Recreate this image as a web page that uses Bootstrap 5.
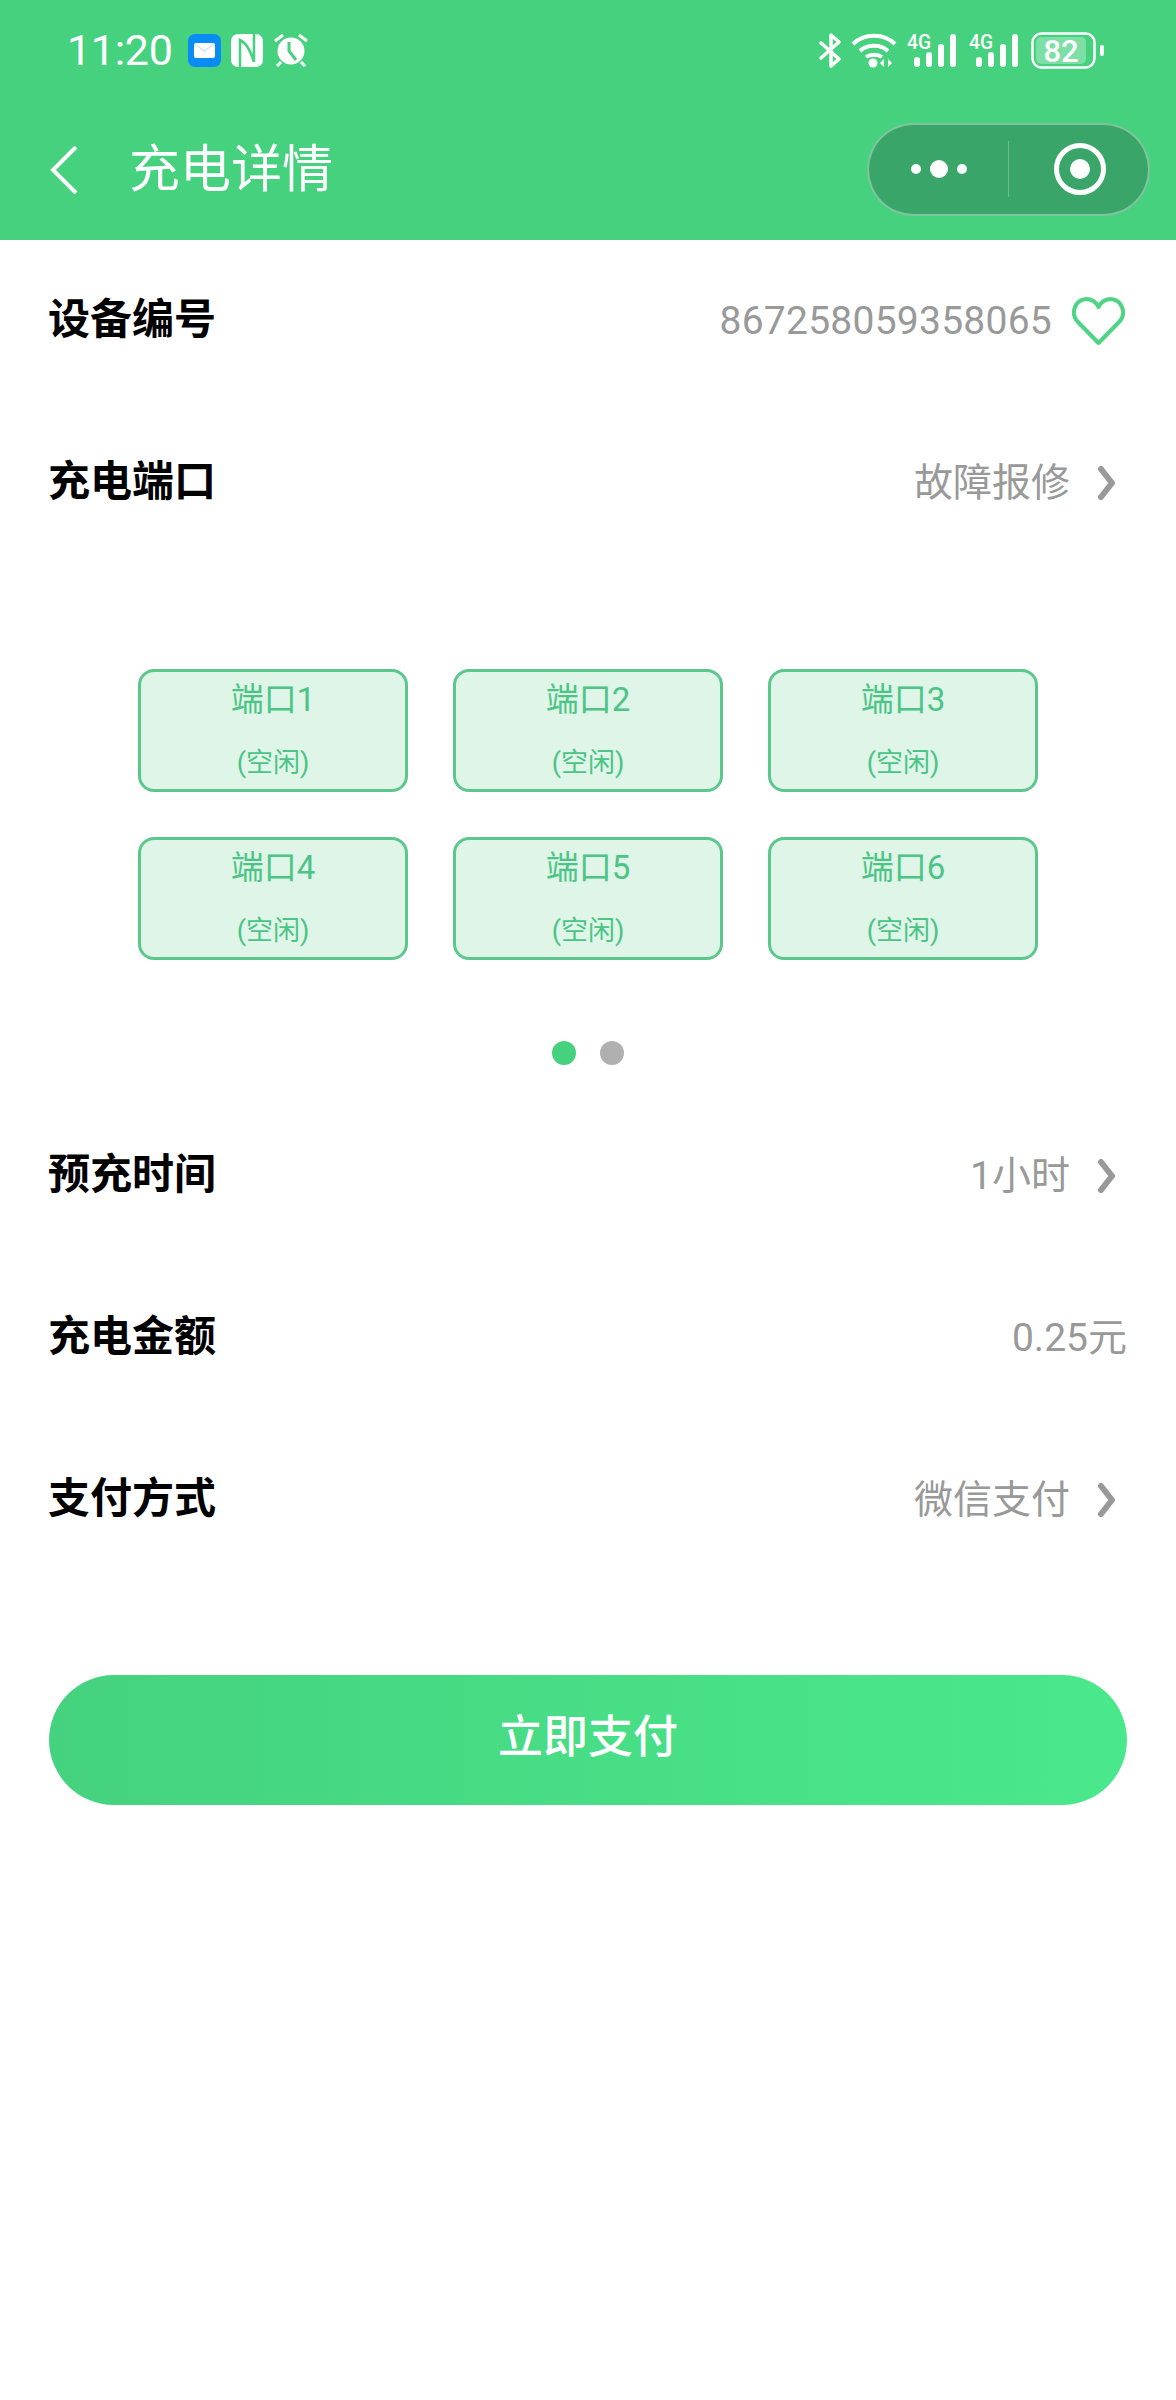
<!DOCTYPE html>
<html lang="zh-CN">
<head>
  <meta charset="UTF-8" />
  <meta name="viewport" content="width=device-width, initial-scale=1.0"/>
  <title>充电详情</title>
  <link href="https://cdn.jsdelivr.net/npm/bootstrap@5.3.0/dist/css/bootstrap.min.css" rel="stylesheet"/>
  <style>
    body {
      background-color: #fff;
      font-family: Roboto, "Noto Sans CJK SC", sans-serif;
    }
    .app-head { background-color: #45d17e; color: #fff; height: 240px; }
    .status-line { height: 100px; padding: 0 71px 0 67px; }
    .status-time { font-size: 43px; line-height: 44px; width: 121px; letter-spacing: -.3px; }
    .stat-gap { margin-left: 10px; }
    .nav-line { height: 140px; padding: 0 26px 0 50px; }
    .nav-title { font-size: 51px; line-height: 1; font-weight: 400; margin: -9px 0 0 51px; font-family: "Noto Sans CJK SC", sans-serif; }
    .capsule {
      width: 283px; height: 93px; margin-top: -2px;
      background-color: #3aa568;
      border: 2px solid rgba(255,255,255,.35);
    }
    .capsule-side { width: 140px; }
    .capsule-side.right-side { padding-left: 2px; }
    .capsule-line { width: 1px; height: 56px; background: rgba(255,255,255,.25); }
    .info-row { height: 162px; padding: 0 49px; }
    .info-label { font-size: 42px; font-weight: 700; color: #000; font-family: "Noto Sans CJK SC", sans-serif; line-height: 1; margin: -11px 0 0 -1px; }
    .info-value { font-size: 39px; color: #999; line-height: 1; }
    .info-num { letter-spacing: .25px; }
    .chevron { margin: 0 12px 0 28px; }
    .heart { margin: 0 2px 0 20px; }
    .port-area { height: 531px; padding-top: 105px; }
    .port-grid { display: grid; grid-template-columns: repeat(3, 270px); gap: 45px 45px; justify-content: center; }
    .port-cell {
      height: 123px; padding-top: 8px;
      background-color: #def5e8; color: #4cc486;
      border: 3px solid #5cc78c; border-radius: 16px;
    }
    .port-name { font-size: 33px; line-height: 40px; }
    .port-state { font-size: 27px; line-height: 30px; margin-top: 28px; }
    .pager { margin-top: 81px; gap: 24px; }
    .pager-dot { width: 24px; height: 24px; background: #b0b0b0; }
    .pager-dot.on { background: #45d17e; }
    .pay-wrap { padding: 94px 49px 0; }
    .pay-btn {
      height: 130px; padding-bottom: 18px; font-size: 45px; font-weight: 500; color: #fff; border: 0;
      background: linear-gradient(90deg, #45d27f, #4ae88c);
      font-family: "Noto Sans CJK SC", sans-serif;
    }
    .pay-btn:hover { color: #fff; }
  </style>
</head>
<body>
  <header class="app-head">
    <div class="status-line d-flex justify-content-between align-items-center">
      <div class="d-flex align-items-center">
        <span class="status-time">11:20</span>
        <svg width="33" height="33" viewBox="0 0 33 33"><rect width="33" height="33" rx="7" fill="#0a8cf5"/><rect x="6" y="9" width="21" height="15" rx="2" fill="#fff"/><path d="M7 10l9.500 7L26 10" fill="none" stroke="#cfe6fb" stroke-width="1.500"/></svg>
        <svg class="stat-gap" width="32" height="33" viewBox="0 0 32 33"><rect width="32" height="33" rx="7" fill="#fff"/><path d="M9 33V6c7 3 11 12 14 22V0" fill="none" stroke="#45d17e" stroke-width="2.500"/></svg>
        <svg class="stat-gap" width="36" height="34" viewBox="0 0 36 34"><circle cx="18" cy="18" r="13.500" fill="#fff"/><path d="M16 9v9l7 9" fill="none" stroke="#45d17e" stroke-width="3"/><path d="M2 8l8-6M34 8l-8-6M8 29l-4 4M28 29l4 4" stroke="#fff" stroke-width="3" fill="none"/></svg>
      </div>
      <div class="d-flex align-items-center">
        <svg width="22" height="35" viewBox="0 0 22 35" fill="none" stroke="#fff" stroke-width="3.500"><path d="M2 10l18 16-8 7V2l8 7L2 25" stroke-linejoin="round" stroke-linecap="round"/></svg>
        <svg class="stat-gap" width="46" height="35" viewBox="0 0 46 35" fill="none" stroke="#fff" stroke-width="4"><path d="M2 11c11-11 31-11 42 0M9 18c7-7 21-7 28 0M15 24c4-3 12-3 16 0"/><circle cx="22" cy="30" r="4.500" fill="#fff" stroke="none"/><path d="M33 26v8l-4-4zM37 26v8l4-4z" fill="#fff" stroke="none"/></svg>
        <svg class="stat-gap" width="52" height="43" viewBox="0 -5 52 43" fill="#fff"><text x="0" y="15" font-family="Roboto" font-size="21" font-weight="500" textLength="24" lengthAdjust="spacingAndGlyphs">4G</text><rect x="7" y="23" width="6" height="10" rx="3"/><rect x="19" y="18" width="6" height="15" rx="3"/><rect x="31" y="10" width="6" height="23" rx="3"/><rect x="43" y="0" width="6" height="33" rx="3"/></svg>
        <svg class="stat-gap" width="52" height="43" viewBox="0 -5 52 43" fill="#fff"><text x="0" y="15" font-family="Roboto" font-size="21" font-weight="500" textLength="24" lengthAdjust="spacingAndGlyphs">4G</text><rect x="7" y="23" width="6" height="10" rx="3"/><rect x="19" y="18" width="6" height="15" rx="3"/><rect x="31" y="10" width="6" height="23" rx="3"/><rect x="43" y="0" width="6" height="33" rx="3"/></svg>
        <svg class="stat-gap" width="74" height="37" viewBox="0 0 74 37"><rect x="1.500" y="1.500" width="62" height="34" rx="9" fill="none" stroke="#fff" stroke-width="2.500"/><rect x="5" y="5" width="50" height="27" rx="5" fill="#fff" fill-opacity=".3"/><text x="30" y="30" text-anchor="middle" font-family="Roboto" font-size="31" font-weight="500" fill="#fff">82</text><rect x="69" y="13" width="4" height="11" rx="2" fill="#fff"/></svg>
      </div>
    </div>
    <div class="nav-line d-flex align-items-center">
      <svg width="28" height="48" viewBox="0 0 28 48" fill="none" stroke="#fff" stroke-width="4"><path d="M26 1L3 24l23 23"/></svg>
      <h1 class="nav-title flex-grow-1">充电详情</h1>
      <div class="capsule rounded-pill d-flex align-items-center">
        <div class="capsule-side d-flex justify-content-center align-items-center">
          <svg width="56" height="20" viewBox="0 0 56 20" fill="#fff"><circle cx="5" cy="10" r="5"/><circle cx="28" cy="10" r="9"/><circle cx="51" cy="10" r="5"/></svg>
        </div>
        <div class="capsule-line"></div>
        <div class="capsule-side right-side d-flex justify-content-center align-items-center">
          <svg width="52" height="52" viewBox="0 0 52 52"><circle cx="26" cy="26" r="23.500" fill="none" stroke="#fff" stroke-width="5"/><circle cx="26" cy="26" r="10" fill="#fff"/></svg>
        </div>
      </div>
    </div>
  </header>

  <main>
    <div class="info-row d-flex justify-content-between align-items-center">
      <span class="info-label">设备编号</span>
      <span class="d-flex align-items-center">
        <span class="info-value info-num">867258059358065</span>
        <svg class="heart" width="53" height="48" viewBox="0 0 53 48" fill="none" stroke="#4fd486" stroke-width="4"><path d="M26.500 46L5 24C-1 17 2 3 14 2c6 0 10 3 12.500 8C29 5 33 2 39 2c12 1 15 15 9 22z" stroke-linejoin="round"/></svg>
      </span>
    </div>
    <div class="info-row d-flex justify-content-between align-items-center">
      <span class="info-label">充电端口</span>
      <span class="d-flex align-items-center">
        <span class="info-value">故障报修</span>
        <svg class="chevron" width="17" height="34" viewBox="0 0 17 34" fill="none" stroke="#999" stroke-width="6"><path d="M3 3l11 14L3 31" stroke-linecap="round" stroke-linejoin="round"/></svg>
      </span>
    </div>

    <div class="port-area">
      <div class="port-grid" id="portGrid"></div>
      <div class="pager d-flex justify-content-center">
        <span class="pager-dot on rounded-circle"></span>
        <span class="pager-dot rounded-circle"></span>
      </div>
    </div>

    <div class="info-row d-flex justify-content-between align-items-center">
      <span class="info-label">预充时间</span>
      <span class="d-flex align-items-center">
        <span class="info-value">1小时</span>
        <svg class="chevron" width="17" height="34" viewBox="0 0 17 34" fill="none" stroke="#999" stroke-width="6"><path d="M3 3l11 14L3 31" stroke-linecap="round" stroke-linejoin="round"/></svg>
      </span>
    </div>
    <div class="info-row d-flex justify-content-between align-items-center">
      <span class="info-label">充电金额</span>
      <span class="info-value">0.25元</span>
    </div>
    <div class="info-row d-flex justify-content-between align-items-center">
      <span class="info-label">支付方式</span>
      <span class="d-flex align-items-center">
        <span class="info-value">微信支付</span>
        <svg class="chevron" width="17" height="34" viewBox="0 0 17 34" fill="none" stroke="#999" stroke-width="6"><path d="M3 3l11 14L3 31" stroke-linecap="round" stroke-linejoin="round"/></svg>
      </span>
    </div>

    <div class="pay-wrap">
      <button class="pay-btn btn rounded-pill w-100" type="button">立即支付</button>
    </div>
  </main>

  <script>
    const grid = document.getElementById("portGrid");
    [1, 2, 3, 4, 5, 6].forEach(n => {
      const cell = document.createElement("div");
      cell.className = "port-cell text-center";
      cell.innerHTML = `
        <div class="port-name">端口${n}</div>
        <div class="port-state">(空闲)</div>
      `;
      grid.appendChild(cell);
    });
  </script>
  <script src="https://cdn.jsdelivr.net/npm/bootstrap@5.3.0/dist/js/bootstrap.bundle.min.js"></script>
</body>
</html>
